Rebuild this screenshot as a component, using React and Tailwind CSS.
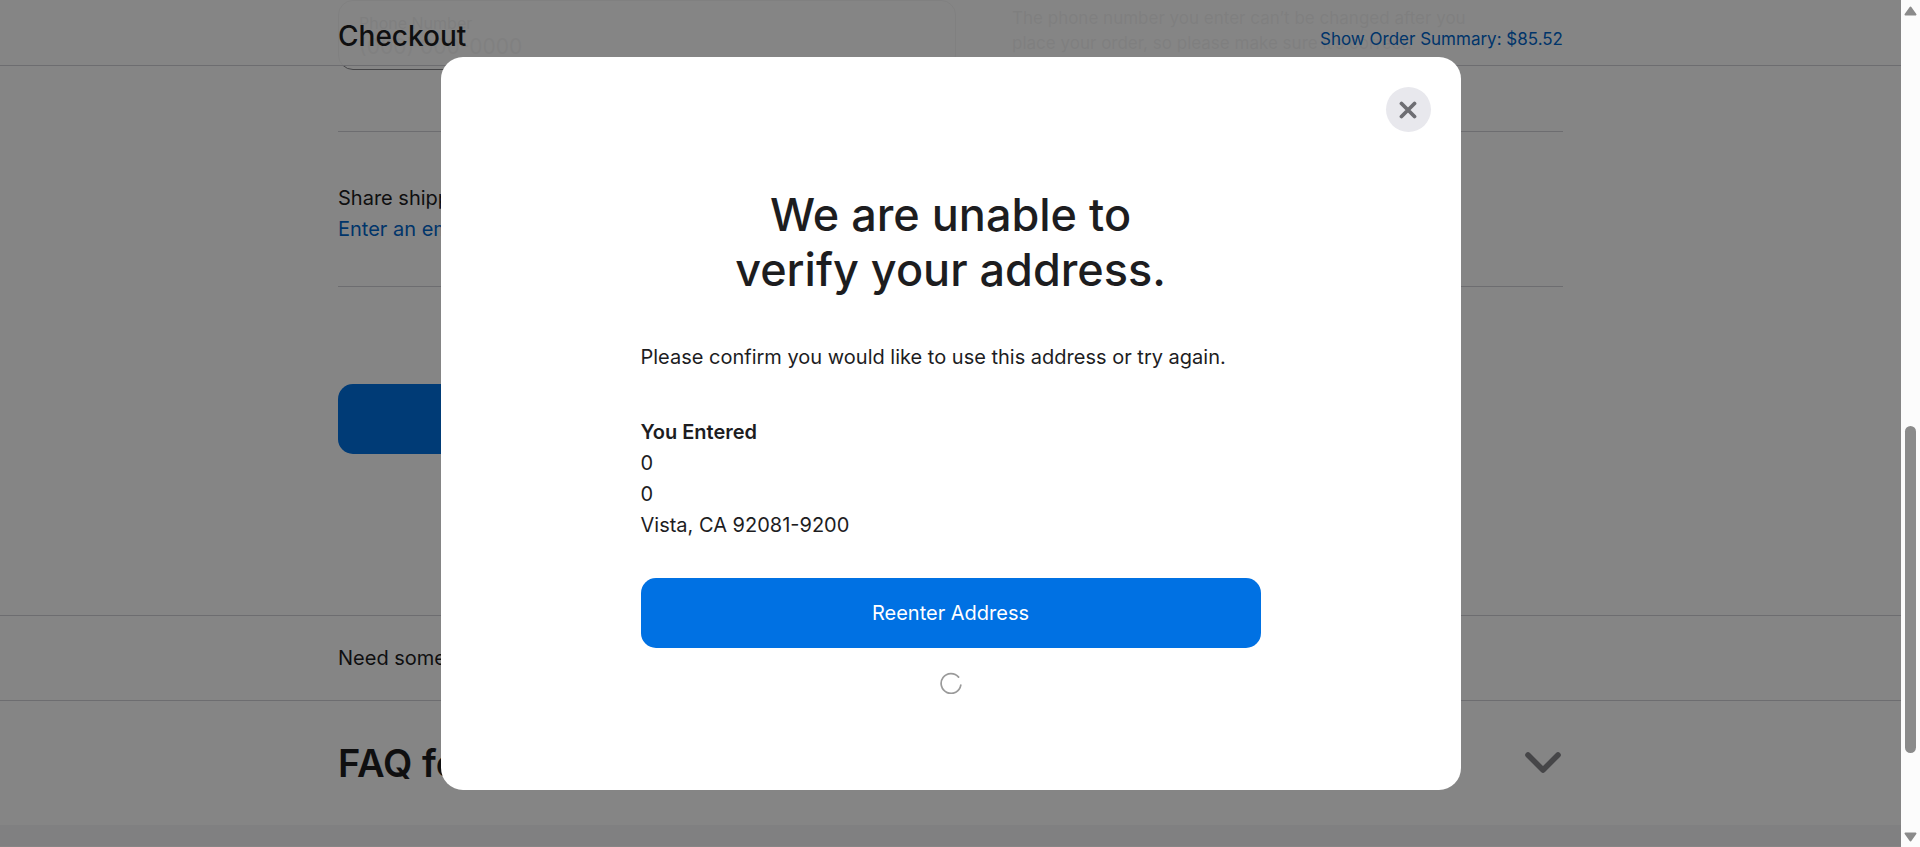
function Chevron() {
  return (
    <svg className="h-6 w-9" viewBox="0 0 36 24" fill="none" stroke="#86868b" strokeWidth="5.6" strokeLinecap="round" strokeLinejoin="round" aria-hidden="true">
      <path d="M3 4l15 15L33 4" />
    </svg>
  );
}

function Header() {
  return (
    <header className="absolute inset-x-0 top-0 h-[66px] border-b border-[#d2d2d7] bg-white/92">
      <div className="mx-auto flex w-full max-w-[1225px] items-center justify-between pt-[15px]">
        <h1 className="text-[28px] leading-[42px] font-medium">Checkout</h1>
        <a href="#summary" className="pt-1.5 text-[17px] leading-6 text-[#06c]">Show Order Summary: $85.52</a>
      </div>
    </header>
  );
}

function CheckoutPage() {
  return (
    <div className="relative flex-1">
      <main className="mx-auto max-w-[1225px]">
        <section className="flex gap-14 border-b border-[#d2d2d7] pb-[61px]">
          <label className="flex h-[70px] w-[618px] flex-col rounded-[15px] border border-[#86868b] px-5 pt-3 text-[#6e6e73]">
            <span className="text-[16px] leading-5">Phone Number</span>
            <input type="tel" placeholder="(000) 000-0000" className="w-full bg-transparent text-[21px] leading-7 outline-none placeholder:text-[#86868b]" />
          </label>
          <p className="w-[480px] pt-[6px] text-[17px] leading-[25px] text-[#6e6e73]">
            The phone number you enter can’t be changed after you place your order, so please make sure it’s correct.
          </p>
        </section>
        <section className="border-b border-[#d2d2d7] pt-[51px] pb-[41px] text-[20px] leading-[31px]">
          <p>Share shipping updates with more people</p>
          <a href="#email" className="text-[#06c]">Enter an email address</a>
        </section>
        <div className="pt-[97px] pb-[161px]">
          <button type="button" className="h-[70px] w-[620px] rounded-[15px] bg-[#0071e3] text-[20px] text-white">Continue to Payment</button>
        </div>
      </main>
      <section className="border-y border-[#d2d2d7] py-[26px]">
        <p className="mx-auto max-w-[1225px] text-[20px] leading-8">Need some help? Chat now or call us.</p>
      </section>
      <section className="mx-auto flex max-w-[1225px] items-center justify-between py-[38px] pr-0.5">
        <h2 className="text-[38px] leading-[48px] font-semibold">FAQ for checkout</h2>
        <button type="button" aria-label="Expand questions">
          <Chevron />
        </button>
      </section>
      <footer className="h-[21px] bg-[#f5f5f7]" />
      <Header />
    </div>
  );
}

function AddressDialog() {
  return (
    <div className="absolute inset-0 flex items-center justify-center bg-black/48">
      <div role="dialog" aria-modal="true" aria-labelledby="dialog-title" className="relative flex w-[1020px] flex-col items-center rounded-[22px] bg-white pt-[130px] pb-24">
        <button type="button" aria-label="Close" className="absolute top-[30px] right-[30px] flex size-[45px] items-center justify-center rounded-full bg-[#e8e8ed]">
          <svg className="size-[18px]" viewBox="0 0 18 18" stroke="#6e6e73" strokeWidth="3.8" strokeLinecap="round" aria-hidden="true">
            <path d="M2.5 2.5l13 13M15.5 2.5l-13 13" />
          </svg>
        </button>
        <h2 id="dialog-title" className="text-center text-[45px] leading-[55px] font-medium">
          We are unable to
          <br />
          verify your address.
        </h2>
        <div className="flex w-[620px] flex-col pt-[45px] text-[20px] leading-[31px]">
          <p>Please confirm you would like to use this address or try again.</p>
          <h3 className="pt-11 font-semibold">You Entered</h3>
          <address className="not-italic">
            0<br />0<br />Vista, CA 92081-9200
          </address>
          <button type="button" className="mt-[37px] h-[70px] rounded-[15px] bg-[#0071e3] text-white">Reenter Address</button>
        </div>
        <svg className="mt-6 size-[22px]" viewBox="0 0 22 22" fill="none" stroke="#9a9a9a" strokeWidth="1.7" strokeLinecap="round" role="img" aria-label="Loading">
          <path d="M18.6 5.1A9.9 9.9 0 1 0 20.8 13.2" />
        </svg>
      </div>
    </div>
  );
}

function ScrollRail() {
  return (
    <div className="flex w-[19px] flex-col items-center justify-between bg-[#fcfcfc] pt-[6px] pb-[5px]" aria-hidden="true">
      <svg className="h-[10px] w-[13px]" viewBox="0 0 13 10" fill="#8b8b8b" stroke="#8b8b8b" strokeWidth="2" strokeLinejoin="round">
        <path d="M6.5 1.5L11.5 8.5H1.5z" />
      </svg>
      <div className="flex w-[11px] flex-1 flex-col">
        <div className="flex-[410]" />
        <div className="flex-[327] rounded-full bg-[#8b8b8b]" />
        <div className="flex-[79]" />
      </div>
      <svg className="h-[10px] w-[13px]" viewBox="0 0 13 10" fill="#8b8b8b" stroke="#8b8b8b" strokeWidth="2" strokeLinejoin="round">
        <path d="M6.5 8.5L11.5 1.5H1.5z" />
      </svg>
    </div>
  );
}

export default function App() {
  return (
    <div className="flex h-screen overflow-hidden bg-white font-['Inter','Liberation_Sans',sans-serif] text-[#1d1d1f]">
      <div className="relative flex flex-1 overflow-hidden">
        <CheckoutPage />
        <AddressDialog />
      </div>
      <ScrollRail />
    </div>
  );
}
